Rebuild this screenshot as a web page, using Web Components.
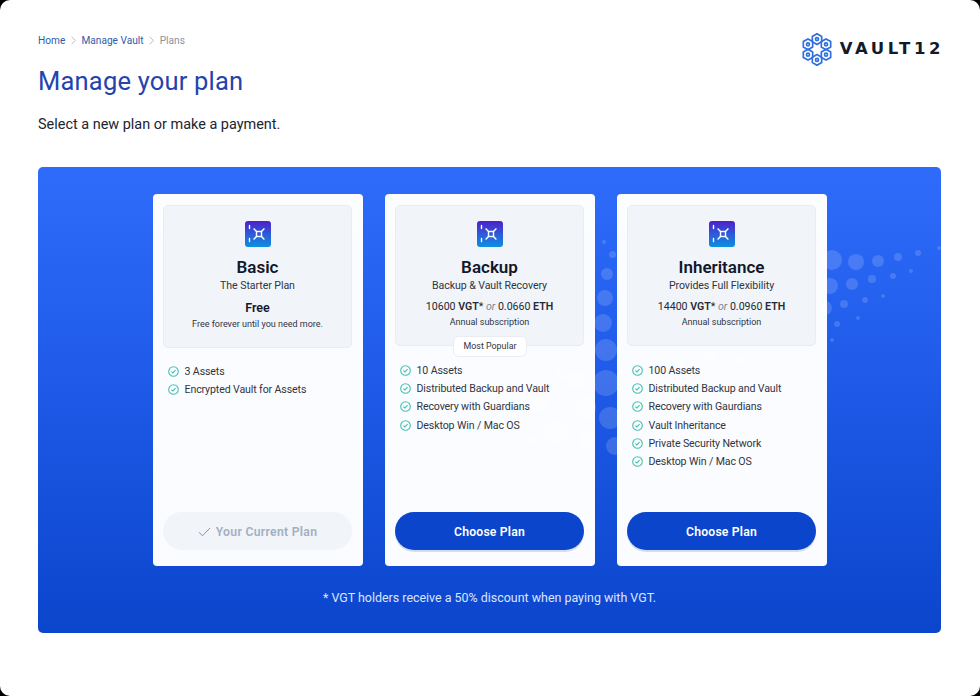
<!DOCTYPE html>
<html>
<head>
<meta charset="utf-8">
<title>Manage your plan</title>
<style>
html, body { margin: 0; height: 100%; background: #000; }
body { font-family: Roboto, "Liberation Sans", sans-serif; }
</style>
</head>
<body>
<plans-page>
  <bread-crumbs slot="crumbs"></bread-crumbs>
  <vault-logo slot="logo"></vault-logo>

  <plan-card name="Basic" tagline="The Starter Plan" current>
    <div slot="price" class="free">Free</div>
    <div slot="note">Free forever until you need more.</div>
    <check-item>3 Assets</check-item>
    <check-item>Encrypted Vault for Assets</check-item>
  </plan-card>

  <plan-card name="Backup" tagline="Backup &amp; Vault Recovery" badge="Most Popular">
    <price-line slot="price" vgt="10600" eth="0.0660"></price-line>
    <div slot="note">Annual subscription</div>
    <check-item>10 Assets</check-item>
    <check-item>Distributed Backup and Vault</check-item>
    <check-item>Recovery with Guardians</check-item>
    <check-item>Desktop Win / Mac OS</check-item>
  </plan-card>

  <plan-card name="Inheritance" tagline="Provides Full Flexibility">
    <price-line slot="price" vgt="14400" eth="0.0960"></price-line>
    <div slot="note">Annual subscription</div>
    <check-item>100 Assets</check-item>
    <check-item>Distributed Backup and Vault</check-item>
    <check-item>Recovery with Gaurdians</check-item>
    <check-item>Vault Inheritance</check-item>
    <check-item>Private Security Network</check-item>
    <check-item>Desktop Win / Mac OS</check-item>
  </plan-card>
</plans-page>

<script>
const FONT = 'Roboto, "Liberation Sans", sans-serif';

class PlansPage extends HTMLElement {
    constructor() {
        super();
        this.attachShadow({ mode: 'open' });
        this.shadowRoot.innerHTML = `
<style>
:host {
    display: block;
    height: 696px;
    box-sizing: border-box;
    background: #fff;
    border-radius: 10px;
    padding: 33px 39px 0 38px;
    font-family: ${FONT};
    overflow: hidden;
}
header {
    display: flex;
    justify-content: space-between;
    align-items: flex-start;
    height: 134px;
}
h1 {
    margin: 16px 0 0;
    font-size: 25.5px;
    line-height: 36px;
    font-weight: 400;
    color: #2443ad;
    letter-spacing: .2px;
}
p {
    margin: 16px 0 0;
    font-size: 14.45px;
    line-height: 20px;
    color: #20252f;
}
.panel {
    position: relative;
    height: 466px;
    box-sizing: border-box;
    border-radius: 5px;
    overflow: hidden;
    background: linear-gradient(180deg, #2f6cfb 0%, #1f5be8 45%, #0b45cc 100%);
    padding-top: 27px;
}
.cards {
    position: relative;
    display: flex;
    justify-content: center;
    gap: 22px;
    padding-left: 1px;
}
.foot {
    position: relative;
    margin: 23px 0 0;
    text-align: center;
    font-size: 12.45px;
    line-height: 18px;
    color: #dbe6ff;
}
</style>
<header>
    <div>
        <slot name="crumbs"></slot>
        <h1>Manage your plan</h1>
        <p>Select a new plan or make a payment.</p>
    </div>
    <slot name="logo"></slot>
</header>
<section class="panel">
    <dot-field></dot-field>
    <div class="cards"><slot></slot></div>
    <div class="foot">* VGT holders receive a 50% discount when paying with VGT.</div>
</section>`;
    }
}

class BreadCrumbs extends HTMLElement {
    constructor() {
        super();
        this.attachShadow({ mode: 'open' });
        const chev = `<svg width="5" height="9" viewBox="0 0 5 9"><path d="M.6 .8 4.4 4.5 .6 8.2" fill="none" stroke="#b9c0cc" stroke-width="1"/></svg>`;
        this.shadowRoot.innerHTML = `
<style>
:host { display: flex; align-items: center; gap: 5.6px; height: 14px; font-size: 10.15px; color: #2f5cab; }
span:last-child { color: #8992a0; }
svg { display: block; }
</style>
<span>Home</span>${chev}<span>Manage Vault</span>${chev}<span>Plans</span>`;
    }
}

class VaultLogo extends HTMLElement {
    constructor() {
        super();
        this.attachShadow({ mode: 'open' });
        let hexes = '';
        for (let i = 0; i < 6; i++) {
            const a = (90 + i * 60) * Math.PI / 180;
            const cx = 16 + 10.4 * Math.cos(a);
            const cy = 16.5 - 10.4 * Math.sin(a);
            let pts = [];
            for (let k = 0; k < 6; k++) {
                const b = (90 + k * 60) * Math.PI / 180;
                pts.push((cx + 5.4 * Math.cos(b)).toFixed(2) + ',' + (cy - 5.4 * Math.sin(b)).toFixed(2));
            }
            hexes += `<polygon points="${pts.join(' ')}"/><circle cx="${cx.toFixed(2)}" cy="${cy.toFixed(2)}" r="1.5"/>`;
        }
        this.shadowRoot.innerHTML = `
<style>
:host { display: flex; align-items: center; gap: 7px; height: 33px; }
svg { display: block; }
span { font: 700 16.5px/20px "DejaVu Sans", sans-serif; color: #131a2c; letter-spacing: 3.55px; margin-right: -3px; margin-top: -1px; }
</style>
<svg width="32" height="33" viewBox="0 0 32 33" fill="none" stroke="#2f6fe0" stroke-width="1.7" stroke-linejoin="round">${hexes}</svg>
<span>VAULT12</span>`;
    }
}

// circles sit behind the cards, the cards are a little see-through
class DotField extends HTMLElement {
    constructor() {
        super();
        this.attachShadow({ mode: 'open' });
        const dots = [
            [832,260,10],[856,262,8],[878,261,6],[898,257,4],[918,253,3],[939,248,2],
            [830,286,8],[852,284,6],[872,279,4],[893,276,3],[911,271,2],
            [825,308,7],[844,304,4],[865,300,3],[883,296,2],
            [837,324,3],[858,318,2],[832,340,2],
            [604,242,2],[612,254,3.5],[607,274,6],[605,298,8],[603,323,9],[606,350,11],[606,383,13],
            [610,418,11],[615,446,9],[587,440,8],[585,408,11],[555,432,12],[540,405,8],[575,380,9],
            [650,372,7],[680,362,5],[710,355,5],[740,360,4],[770,370,3],[640,410,9],[672,398,6],[700,392,4],
            [640,445,7],[665,430,5],[560,375,6],[530,440,6]
        ];
        this.shadowRoot.innerHTML = `
<style>
:host { position: absolute; inset: 0; display: block; }
i { position: absolute; border-radius: 50%; background: rgba(255,255,255,.15); }
</style>` + dots.map(([x, y, r]) =>
            `<i style="left:${x - r - 38}px;top:${y - r - 167}px;width:${r * 2}px;height:${r * 2}px"></i>`).join('');
    }
}

class VaultIcon extends HTMLElement {
    constructor() {
        super();
        this.attachShadow({ mode: 'open' });
        const id = 'g' + Math.random().toString(36).slice(2);
        this.shadowRoot.innerHTML = `
<style>:host { display: block; width: 26px; height: 26px; } svg { display: block; }</style>
<svg width="26" height="26" viewBox="0 0 26 26">
  <defs><linearGradient id="${id}" x1="0" y1="0" x2="0" y2="1">
    <stop offset="0" stop-color="#4f1fc9"/><stop offset=".5" stop-color="#2e5ad8"/><stop offset="1" stop-color="#0a90e2"/>
  </linearGradient></defs>
  <rect width="26" height="26" rx="3" fill="url(#${id})"/>
  <g fill="none" stroke="#fff" stroke-width="1.4">
    <rect x="11.5" y="10.5" width="5" height="5"/>
    <path d="M11.5 10.5 8.6 7.6M16.5 10.5 19.4 7.6M11.5 15.5 8.6 18.4M16.5 15.5 19.4 18.4"/>
    <path d="M4.5 4.5v3M4.5 17.5v3" stroke-linecap="round"/>
  </g>
</svg>`;
    }
}

class CheckItem extends HTMLElement {
    constructor() {
        super();
        this.attachShadow({ mode: 'open' });
        this.shadowRoot.innerHTML = `
<style>
:host { display: flex; align-items: center; gap: 5.5px; height: 18.33px; font-size: 10.6px; color: #30353f; letter-spacing: -.12px; white-space: nowrap; }
svg { display: block; flex: none; }
</style>
<svg width="11" height="11" viewBox="0 0 11 11" fill="none" stroke="#45c1b1">
  <circle cx="5.5" cy="5.5" r="4.8" stroke-width="1.1"/>
  <path d="M3.4 5.6 4.9 7 7.6 4.2" stroke-width="1.1"/>
</svg>
<span><slot></slot></span>`;
    }
}

class PriceLine extends HTMLElement {
    constructor() {
        super();
        this.attachShadow({ mode: 'open' });
        const vgt = this.getAttribute('vgt');
        const eth = this.getAttribute('eth');
        this.shadowRoot.innerHTML = `
<style>
:host { display: block; font-size: 10.6px; line-height: 15px; color: #252a35; }
b { font-weight: 600; }
em { color: #7d8592; }
</style>
${vgt} <b>VGT</b>* <em>or</em> ${eth} <b>ETH</b>`;
    }
}

class PlanCard extends HTMLElement {
    constructor() {
        super();
        this.attachShadow({ mode: 'open' });
        const name = this.getAttribute('name');
        const tagline = this.getAttribute('tagline');
        const badge = this.getAttribute('badge');
        const current = this.hasAttribute('current');
        const button = current
            ? `<div class="btn done"><svg width="13" height="10" viewBox="0 0 13 10"><path d="M1 5.2 4.4 8.8 12 1" fill="none" stroke="#8a94a6" stroke-width="1"/></svg>Your Current Plan</div>`
            : `<div class="btn">Choose Plan</div>`;
        this.shadowRoot.innerHTML = `
<style>
:host {
    display: block;
    width: 210px;
    height: 372px;
    box-sizing: border-box;
    background: rgba(255,255,255,.985);
    border-radius: 4px;
    padding: 11px 11px 16px 10px;
}
.wrap { display: flex; flex-direction: column; height: 100%; position: relative; }
.head {
    height: ${current ? 143 : 141}px;
    box-sizing: border-box;
    flex: none;
    background: #f1f4f9;
    border: 1px solid #e8ecf3;
    border-radius: 5px;
    padding-top: 15px;
    display: flex;
    flex-direction: column;
    align-items: center;
    text-align: center;
}
h2 { margin: 10px 0 0; font-size: 17px; line-height: 20px; font-weight: 600; color: #12182a; }
.tag { margin-top: 1px; font-size: 10.6px; line-height: 16px; color: #30353f; letter-spacing: -.07px; }
.head ::slotted([slot=price]) { margin-top: 5px; }
.head ::slotted(.free) { margin-top: 6px; font-size: 12.5px; line-height: 16px; font-weight: 600; color: #12182a; }
.note { margin-top: 1px; font-size: 9px; line-height: 14px; color: #30353f; }
.badge {
    position: absolute;
    top: 130.5px;
    left: 58px;
    width: 74px;
    height: 21px;
    box-sizing: border-box;
    display: flex;
    align-items: center;
    justify-content: center;
    background: #fff;
    border: 1px solid #e9edf3;
    border-radius: 6px;
    font-size: 8.9px;
    color: #30353f;
}
ul { flex: 1; margin: 0; padding: ${current ? 14.5 : 15}px 0 0 5px; }
.btn {
    flex: none;
    height: 38px;
    box-sizing: border-box;
    padding-top: 1px;
    border-radius: 19px;
    background: #0a45cc;
    color: #fff;
    box-shadow: 0 2px 0 #d5ddf2;
    font-size: 12.2px;
    font-weight: 600;
    letter-spacing: .2px;
    display: flex;
    align-items: center;
    justify-content: center;
    gap: 5px;
}
.done { background: #f1f4f9; color: #a3afc2; box-shadow: none; letter-spacing: .3px; }
</style>
<div class="wrap">
    <div class="head">
        <vault-icon></vault-icon>
        <h2>${name}</h2>
        <div class="tag">${tagline}</div>
        <slot name="price"></slot>
        <div class="note"><slot name="note"></slot></div>
    </div>
    ${badge ? `<div class="badge">${badge}</div>` : ''}
    <ul><slot></slot></ul>
    ${button}
</div>`;
    }
}

customElements.define('dot-field', DotField);
customElements.define('bread-crumbs', BreadCrumbs);
customElements.define('vault-logo', VaultLogo);
customElements.define('vault-icon', VaultIcon);
customElements.define('check-item', CheckItem);
customElements.define('price-line', PriceLine);
customElements.define('plan-card', PlanCard);
customElements.define('plans-page', PlansPage);
</script>
</body>
</html>
